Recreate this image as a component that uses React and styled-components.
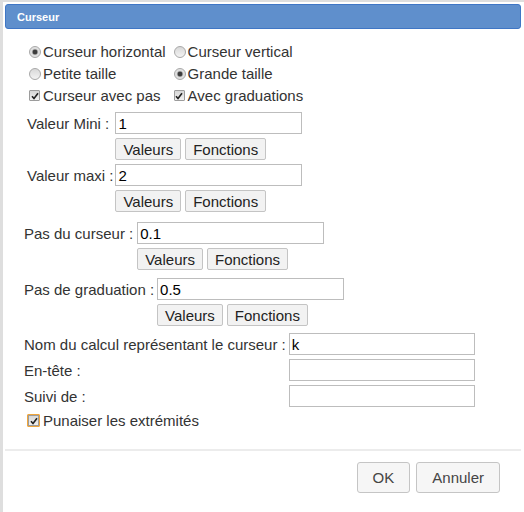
import React from 'react';
import styled, { createGlobalStyle } from 'styled-components';

const GlobalStyle = createGlobalStyle`
  html, body {
    margin: 0;
    padding: 0;
    background: #fff;
  }
  body {
    font-family: "Liberation Sans", Arial, sans-serif;
    font-size: 15px;
    color: #333;
  }
`;

// fenêtre de dialogue
const Page = styled.div`
  box-sizing: border-box;
  height: 512px;
  border-top: 2px solid #dedede;
  border-left: 3px solid #dedede;
  display: flex;
  flex-direction: column;
  padding: 2px 3px 0 2px;
`;
const TitleBar = styled.div`
  box-sizing: border-box;
  height: 25px;
  display: flex;
  align-items: center;
  padding: 0 11px;
  background: #5f8fcc;
  border: 1px solid #3f76c5;
  border-radius: 3px;
`;
const Title = styled.span`
  color: #fff;
  font-weight: bold;
  font-size: 11px;
`;
const Content = styled.div`
  flex: 1;
  padding: 11px 0 0 19px;
`;

// options (radios / cases)
const Options = styled.div`
  display: grid;
  grid-template-columns: auto auto;
  grid-auto-rows: 22px;
  column-gap: 3px;
  justify-content: start;
`;
const Option = styled.label`
  display: flex;
  align-items: center;
  white-space: nowrap;
`;
const Radio = styled.span`
  box-sizing: border-box;
  width: 12px;
  height: 12px;
  margin: 1px 2px 0 5px;
  border-radius: 50%;
  border: 1px solid #a8a8a8;
  background: ${(p) =>
    p.$checked
      ? 'radial-gradient(circle, #3c3c3c 0 2px, #9a9a9a 2.6px, #dcdcdc 3.4px, #ececec 100%)'
      : 'linear-gradient(#d8d8d8, #f3f3f3)'};
`;
const Check = styled.span`
  box-sizing: border-box;
  display: inline-flex;
  align-items: center;
  justify-content: center;
  width: ${(p) => (p.$focus ? '13px' : '11px')};
  height: ${(p) => (p.$focus ? '13px' : '11px')};
  margin: 1px 3px 0 ${(p) => (p.$focus ? '3px' : '5px')};
  border: 1px solid ${(p) => (p.$focus ? '#f0a53a' : '#9c9c9c')};
  box-shadow: ${(p) => (p.$focus ? 'inset 0 0 0 1px #9c9c9c' : 'none')};
  border-radius: 1px;
  background: linear-gradient(#d6d6d6, #f2f2f2);
`;

// champs
const Fields = styled.div`
  display: grid;
  grid-template-columns: auto auto;
  column-gap: ${(p) => p.$gap || 3}px;
  row-gap: 4px;
  justify-content: start;
  align-items: center;
  margin-top: ${(p) => p.$top}px;
  margin-left: ${(p) => p.$left || 0}px;
`;
const Label = styled.span`
  white-space: nowrap;
  grid-column: 1;
`;
const TextInput = styled.input`
  box-sizing: border-box;
  grid-column: 2;
  width: ${(p) => p.$w || 187}px;
  height: 22px;
  padding: 1px 2px;
  border: 1px solid #bdbdbd;
  font-family: "Liberation Sans", Arial, sans-serif;
  font-size: 15px;
  color: #000;
  background: #fff;
  outline: none;
`;
const ButtonRow = styled.div`
  grid-column: 2;
  display: flex;
  gap: 4px;
`;
const SmallButton = styled.button`
  box-sizing: border-box;
  height: 22px;
  padding: 0 7px;
  border: 1px solid #c4c4c4;
  border-radius: 2px;
  background: #f2f2f2;
  font-family: "Liberation Sans", Arial, sans-serif;
  font-size: 15px;
  color: #222;
`;
const CheckRow = styled.label`
  display: flex;
  align-items: center;
  height: 20px;
  margin-top: 3px;
`;

// pied
const Footer = styled.div`
  display: flex;
  justify-content: flex-end;
  gap: 6px;
  border-top: 2px solid #ececec;
  padding: 11px 21px 19px 0;
`;
const DlgButton = styled.button`
  box-sizing: border-box;
  height: 31px;
  padding: 0 15px;
  border: 1px solid #c5c5c5;
  border-radius: 3px;
  background: #f6f6f6;
  font-family: "Liberation Sans", Arial, sans-serif;
  font-size: 15px;
  color: #454545;
`;

function Tick() {
  return (
    <svg width="8" height="8" viewBox="0 0 8 8">
      <path d="M1 4.2 L3 6.5 L7 1.2" fill="none" stroke="#222" strokeWidth="1.6" />
    </svg>
  );
}

function Buttons() {
  return (
    <ButtonRow>
      <SmallButton>Valeurs</SmallButton>
      <SmallButton>Fonctions</SmallButton>
    </ButtonRow>
  );
}

export default function App() {
  return (
    <>
      <GlobalStyle />
      <Page>
        <TitleBar>
          <Title>Curseur</Title>
        </TitleBar>
        <Content>
          <Options>
            <Option><Radio $checked />Curseur horizontal</Option>
            <Option><Radio />Curseur vertical</Option>
            <Option><Radio />Petite taille</Option>
            <Option><Radio $checked />Grande taille</Option>
            <Option><Check><Tick /></Check>Curseur avec pas</Option>
            <Option><Check><Tick /></Check>Avec graduations</Option>
          </Options>

          <Fields $top={6} $left={3} $gap={2}>
            <Label>Valeur Mini :</Label>
            <TextInput defaultValue="1" />
            <Buttons />
            <Label>Valeur maxi :</Label>
            <TextInput defaultValue="2" />
            <Buttons />
          </Fields>

          <Fields $top={10} $gap={4}>
            <Label>Pas du curseur :</Label>
            <TextInput defaultValue="0.1" />
            <Buttons />
          </Fields>

          <Fields $top={8}>
            <Label>Pas de graduation :</Label>
            <TextInput defaultValue="0.5" />
            <Buttons />
          </Fields>

          <Fields $top={7}>
            <Label>Nom du calcul représentant le curseur :</Label>
            <TextInput defaultValue="k" $w={186} />
            <Label>En-tête :</Label>
            <TextInput defaultValue="" $w={186} />
            <Label>Suivi de :</Label>
            <TextInput defaultValue="" $w={186} />
          </Fields>

          <CheckRow>
            <Check $focus><Tick /></Check>Punaiser les extrémités
          </CheckRow>
        </Content>
        <Footer>
          <DlgButton>OK</DlgButton>
          <DlgButton>Annuler</DlgButton>
        </Footer>
      </Page>
    </>
  );
}
